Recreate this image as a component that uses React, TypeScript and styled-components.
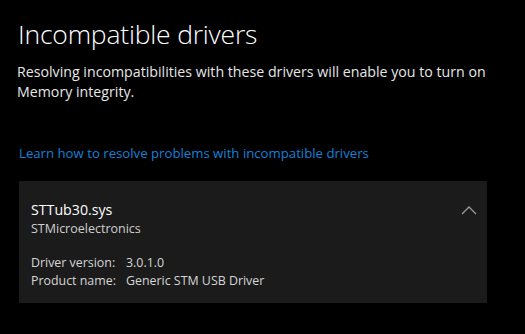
import React from "react";
import styled, { createGlobalStyle } from "styled-components";

const Global = createGlobalStyle`
  html, body { margin: 0; padding: 0; background: #000; }
  body { font-family: "Open Sans", "Noto Sans", sans-serif; color: #fff; }
`;

const Page = styled.div`
  width: 525px;
  height: 334px;
  box-sizing: border-box;
  padding: 16px 0 0 18px;
  display: flex;
  flex-direction: column;
`;

const Title = styled.h1`
  margin: 0;
  font-size: 26.5px;
  font-weight: 300;
  line-height: 36px;
  color: #fff;
  letter-spacing: -0.2px;
`;

const Description = styled.p`
  margin: 10px 0 0 -1px;
  font-size: 14.2px;
  line-height: 20px;
  color: #e6e6e6;
  width: 490px;
`;

const Link = styled.a`
  margin: 41px 0 0 1px;
  font-size: 13.2px;
  line-height: 20px;
  color: #1781d6;
  text-decoration: none;
  cursor: pointer;
`;

const Card = styled.section`
  margin: 18px 0 0 1px;
  width: 468px;
  height: 122px;
  box-sizing: border-box;
  background: #1b1b1b;
  padding: 19px 10px 0 12px;
  display: flex;
  justify-content: space-between;
  align-items: flex-start;
`;

const CardBody = styled.div`
  display: flex;
  flex-direction: column;
`;

const DriverName = styled.div`
  font-size: 14.2px;
  line-height: 20px;
  color: #fff;
`;

const Vendor = styled.div`
  font-size: 12.5px;
  line-height: 18px;
  color: #cfcfcf;
`;

const Details = styled.dl`
  margin: 16px 0 0 0;
  display: grid;
  grid-template-columns: 95px auto;
  row-gap: 0;
  font-size: 12.4px;
  line-height: 18px;
  color: #d6d6d6;
  dt, dd { margin: 0; }
`;

const Chevron = styled.button`
  background: none;
  border: 0;
  padding: 0;
  margin: 5px 0 0 0;
  width: 16px;
  height: 10px;
  display: flex;
  cursor: pointer;
`;

export default function App() {
  return (
    <>
      <Global />
      <Page>
        <Title>Incompatible drivers</Title>
        <Description>
          Resolving incompatibilities with these drivers will enable you to turn on Memory integrity.
        </Description>
        <Link>Learn how to resolve problems with incompatible drivers</Link>
        <Card>
          <CardBody>
            <DriverName>STTub30.sys</DriverName>
            <Vendor>STMicroelectronics</Vendor>
            <Details>
              <dt>Driver version:</dt>
              <dd>3.0.1.0</dd>
              <dt>Product name:</dt>
              <dd>Generic STM USB Driver</dd>
            </Details>
          </CardBody>
          <Chevron aria-label="Collapse">
            <svg width="16" height="10" viewBox="0 0 16 10">
              <path d="M1 9 L8 2 L15 9" fill="none" stroke="#9a9a9a" strokeWidth="1.3" />
            </svg>
          </Chevron>
        </Card>
      </Page>
    </>
  );
}
